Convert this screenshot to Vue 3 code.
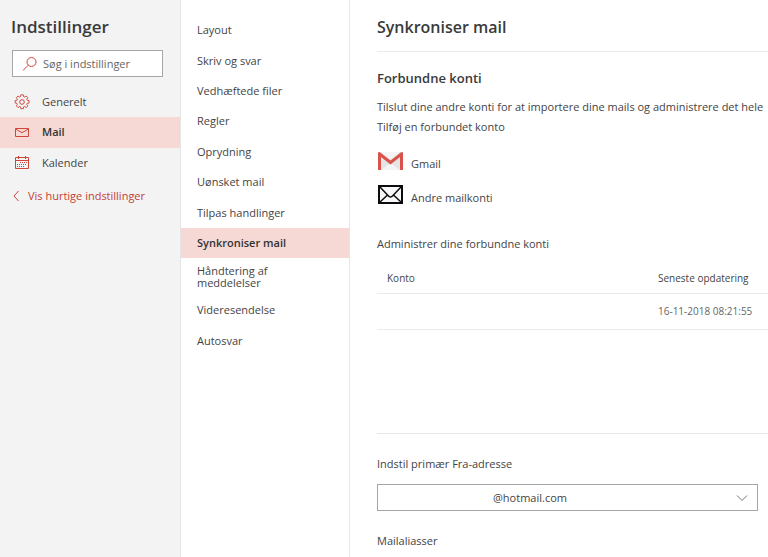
<script setup>
import { ref } from 'vue'

const categories = [
  { id: 'general', label: 'Generelt' },
  { id: 'mail', label: 'Mail' },
  { id: 'calendar', label: 'Kalender' },
]
const pages = [
  'Layout', 'Skriv og svar', 'Vedhæftede filer', 'Regler', 'Oprydning', 'Uønsket mail',
  'Tilpas handlinger', 'Synkroniser mail', 'Håndtering af meddelelser', 'Videresendelse', 'Autosvar',
]
const category = ref('mail')
const page = ref('Synkroniser mail')
const query = ref('')
const sender = ref('@hotmail.com')
const accounts = [{ name: '', updated: '16-11-2018 08:21:55' }]
</script>

<template>
  <div class="settings">
    <aside class="sidebar">
      <h1 class="title">Indstillinger</h1>
      <label class="search">
        <svg class="search-icon" width="16" height="16" viewBox="0 0 16 16" aria-hidden="true">
          <circle cx="9.5" cy="6" r="4.5" />
          <path d="M6.3 9.2 1 14.5" />
        </svg>
        <input v-model="query" type="text" placeholder="Søg i indstillinger" aria-label="Søg i indstillinger" />
      </label>
      <nav class="categories">
        <button
          v-for="c in categories" :key="c.id" type="button"
          class="category" :class="{ selected: c.id === category }" @click="category = c.id"
        >
          <svg v-if="c.id === 'general'" class="icon" width="16" height="16" viewBox="0 0 16 16" aria-hidden="true">
            <path d="M6.7 1.2h2.6l.3 1.9 1.1.5 1.6-1.2 1.8 1.8-1.2 1.6.5 1.1 1.9.3v2.6l-1.9.3-.5 1.1 1.2 1.6-1.8 1.8-1.6-1.2-1.1.5-.3 1.9H6.7l-.3-1.9-1.1-.5-1.6 1.2-1.8-1.8 1.2-1.6-.5-1.1-1.9-.3V7.2l1.9-.3.5-1.1-1.2-1.6 1.8-1.8 1.6 1.2 1.1-.5z" transform="translate(.5 -.3) scale(.95)" />
            <circle cx="8" cy="8" r="2.3" />
          </svg>
          <svg v-else-if="c.id === 'mail'" class="icon" width="16" height="16" viewBox="0 0 16 16" aria-hidden="true">
            <path d="M1.5 4.5h13v8h-13zM1.500 5 8 8.700 14.500 5" />
          </svg>
          <svg v-else class="icon" width="16" height="16" viewBox="0 0 16 16" aria-hidden="true">
            <path d="M1.500 2.500h13v11h-13zM1.500 5.500h13M4.500 1v3M11.500 1v3" />
            <path class="days" d="M6 7.500h7M3 9.500h10M3 11.500h7" />
          </svg>
          <span>{{ c.label }}</span>
        </button>
      </nav>
      <a class="quick" href="#">
        <svg width="8" height="12" viewBox="0 0 8 12" aria-hidden="true"><path d="M6.500 1 2 6l4.500 5" /></svg>
        <span>Vis hurtige indstillinger</span>
      </a>
    </aside>

    <nav class="pages">
      <button
        v-for="p in pages" :key="p" type="button"
        class="page" :class="{ selected: p === page }" @click="page = p"
      >{{ p }}</button>
    </nav>

    <main class="content">
      <h2 class="title heading">Synkroniser mail</h2>
      <section class="connected">
        <h3>Forbundne konti</h3>
        <p>Tilslut dine andre konti for at importere dine mails og administrere det hele</p>
        <p>Tilføj en forbundet konto</p>
        <button type="button" class="provider">
          <svg width="26" height="20" viewBox="0 0 26 20" aria-hidden="true">
            <path fill="#e4e4e4" d="M1 1h25v18H1z" />
            <path fill="#f4f4f4" d="M4 1h19l-9.500 8zM4 19l9.500-7 9.500 7z" />
            <path fill="#d9534a" d="M1 19V2q0-1 1.500-1L13.500 9.500 24.500 1Q26 1 26 2v17h-3V6l-9.500 7.500L4 6v13z" />
          </svg>
          <span>Gmail</span>
        </button>
        <button type="button" class="provider">
          <svg width="26" height="20" viewBox="0 0 26 20" aria-hidden="true">
            <path fill="#f8f8f8" stroke="#0c0c10" stroke-width="2" d="M2 1h23v17H2z" />
            <path fill="none" stroke="#0c0c10" stroke-width="1.500" d="M3 2l8 8.500q2.500 3 5 0L24 2M3 17l7-6.500M24 17l-7-6.500" />
          </svg>
          <span>Andre mailkonti</span>
        </button>
      </section>
      <section class="manage">
        <p>Administrer dine forbundne konti</p>
        <table>
          <thead>
            <tr><th class="name" scope="col">Konto</th><th scope="col">Seneste opdatering</th></tr>
          </thead>
          <tbody>
            <tr v-for="a in accounts" :key="a.updated"><td>{{ a.name }}</td><td>{{ a.updated }}</td></tr>
          </tbody>
        </table>
      </section>
      <section class="sender">
        <label for="sender">Indstil primær Fra-adresse</label>
        <div class="select">
          <select id="sender" v-model="sender"><option>@hotmail.com</option></select>
          <svg width="12" height="8" viewBox="0 0 12 8" aria-hidden="true"><path d="M1 1.500 6 6.500 11 1.500" /></svg>
        </div>
        <p>Mailaliasser</p>
      </section>
    </main>
  </div>
</template>

<style>
body { margin: 0; background: #fff; }
</style>

<style scoped>
.settings {
  display: grid;
  grid-template-columns: 181px 168px minmax(0, 1fr);
  min-height: 100vh;
  overflow: hidden;
  font: 11px/20px "Open Sans", "Noto Sans", sans-serif;
  color: #444;
}
h1, h2, h3, p { margin: 0; }
button, input, select { font: inherit; color: inherit; }
button { border: 0; padding: 0; background: none; text-align: left; cursor: pointer; }
svg { flex: none; }
.title { font-size: 17px; line-height: 24px; font-weight: 600; color: #3a3a3a; }

.sidebar { box-sizing: border-box; padding-top: 15px; background: #f3f3f3; border-right: 1px solid #e6e6e6; }
.sidebar .title { padding-left: 11px; }
.search {
  display: flex;
  align-items: center;
  gap: 5px;
  box-sizing: border-box;
  height: 27px;
  margin: 11px 17px 10px 12px;
  padding-left: 9px;
  background: #fff;
  border: 1px solid #a6a6a6;
}
.search input { flex: 1; min-width: 0; border: 0; padding: 0; outline: 0; background: none; }
.search input::placeholder { color: #666; opacity: 1; }
.search-icon, .icon, .quick svg { fill: none; stroke: #d0453a; }
.icon .days { stroke-dasharray: 1 1; }
.categories { display: grid; grid-auto-rows: 1fr; height: 91px; }
.category { display: flex; align-items: center; gap: 12px; padding-left: 14px; }
.selected { background: #f6d9d5; color: #333; font-weight: 600; }
.quick { display: flex; align-items: center; gap: 8px; margin-top: 8px; padding-left: 12px; color: #c43e35; text-decoration: none; white-space: nowrap; }

.pages {
  display: grid;
  grid-template-rows: repeat(8, 1fr) 37px repeat(2, 1fr);
  box-sizing: border-box;
  height: 356px;
  padding-top: 15px;
}
.page { padding: 0 60px 0 16px; line-height: 12px; }
.page.selected { padding-right: 0; }

.content { padding: 15px 0 0 27px; border-left: 1px solid #e6e6e6; white-space: nowrap; }
.content .heading { padding-bottom: 12px; border-bottom: 1px solid #eaeaea; font-size: 16px; }
.connected { padding-top: 16px; }
.connected h3 { margin-bottom: 9px; font-size: 13px; line-height: 20px; font-weight: 600; color: #3a3a3a; }
.provider { display: flex; align-items: center; gap: 8px; height: 34px; }
.provider span { padding-top: 6px; }
.connected p + .provider { margin-top: 7px; }
.manage { height: 199px; padding-top: 22px; border-bottom: 1px solid #e6e6e6; }
table { width: 100%; margin-top: 10px; border-collapse: collapse; table-layout: fixed; font-size: 10px; line-height: 16px; }
th, td { height: 36px; box-sizing: border-box; padding: 0; border-bottom: 1px solid #ebebeb; text-align: left; font-weight: 400; }
th { height: 29px; }
th:first-child { padding-left: 10px; }
.name { width: 281px; box-sizing: border-box; }
td { color: #666; }
.sender { padding: 20px 10px 6px 0; }
.sender label { display: block; }
.select { position: relative; margin: 10px 0 20px; }
.select select {
  display: block;
  width: 100%;
  height: 27px;
  padding: 0 30px 0 115px;
  appearance: none;
  background: #fff;
  border: 1px solid #a6a6a6;
  border-radius: 0;
}
.select svg { position: absolute; right: 10px; top: 10px; fill: none; stroke: #777; pointer-events: none; }
</style>
